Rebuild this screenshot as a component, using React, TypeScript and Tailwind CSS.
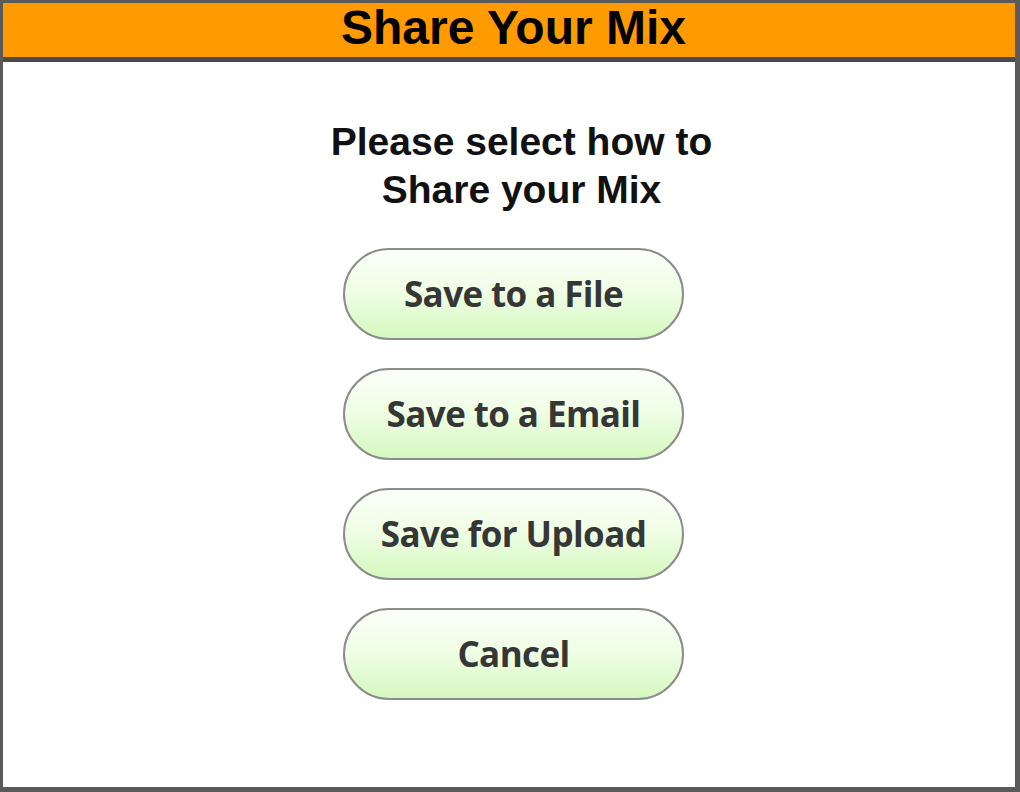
import React from "react";

const options = ["Save to a File", "Save to a Email", "Save for Upload", "Cancel"];

function ShareButton({label}: {label: string}) {
    return (
        <button
            type="button"
            className="w-[341px] h-[92px] rounded-full border-2 border-[#8c8c8c] bg-gradient-to-b from-[#fbfff8] via-[#eefee4] to-[#d5f8bf] text-[#363636] text-[35px] font-bold tracking-[-0.6px] shadow-[inset_0_1px_0_#ffffff]"
            style={{fontFamily: '"Open Sans", "Noto Sans", sans-serif'}}
        >
            {label}
        </button>
    );
}

function App() {
    return (
        <main className="w-full h-[792px] bg-white">
            <section className="flex flex-col h-full border-l-[3px] border-t-[3px] border-r-[5px] border-b-[5px] border-[#5a5a5a]">
                <header
                    className="h-[59px] shrink-0 bg-[#ff9a00] border-b-[5px] border-[#4a4a4a] flex justify-center pl-[9px]"
                    style={{fontFamily: '"Liberation Sans", Arial, sans-serif'}}
                >
                    <h1 className="text-[48px] leading-[49px] font-bold text-black">Share Your Mix</h1>
                </header>

                <div className="flex flex-col items-center pl-[9px]">
                    <p
                        className="mt-[56px] pl-[16px] text-center text-[39px] leading-[48px] font-bold text-[#111]"
                        style={{fontFamily: '"Liberation Sans", Arial, sans-serif'}}
                    >
                        Please select how to<br/>Share your Mix
                    </p>

                    <div className="mt-[34px] flex flex-col gap-[28px]">
                        {options.map(option => (
                            <ShareButton key={option} label={option}/>
                        ))}
                    </div>
                </div>
            </section>
        </main>
    );
}

export default App;
